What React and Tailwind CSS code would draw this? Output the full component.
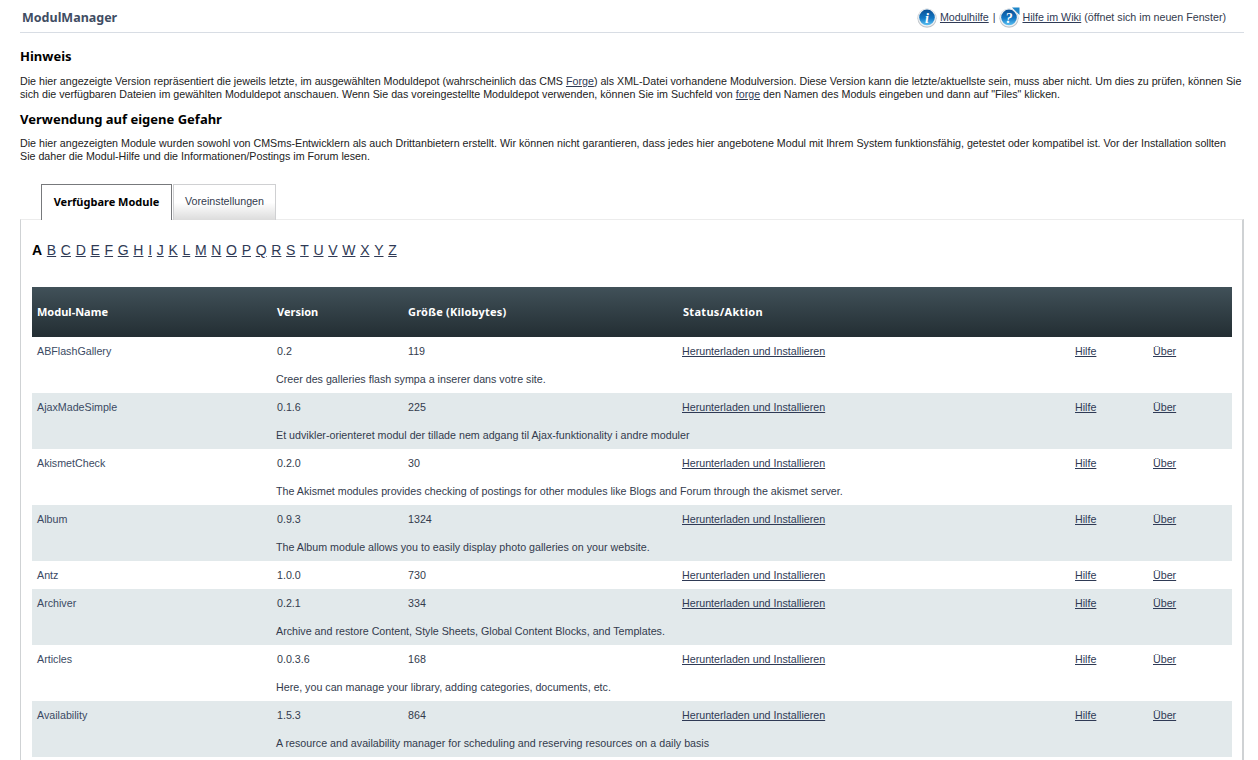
const letters = "BCDEFGHIJKLMNOPQRSTUVWXYZ".split("");
const mods = [
  ["ABFlashGallery", "0.2", "119", "Creer des galleries flash sympa a inserer dans votre site."],
  ["AjaxMadeSimple", "0.1.6", "225", "Et udvikler-orienteret modul der tillade nem adgang til Ajax-funktionality i andre moduler"],
  ["AkismetCheck", "0.2.0", "30", "The Akismet modules provides checking of postings for other modules like Blogs and Forum through the akismet server."],
  ["Album", "0.9.3", "1324", "The Album module allows you to easily display photo galleries on your website."],
  ["Antz", "1.0.0", "730", ""],
  ["Archiver", "0.2.1", "334", "Archive and restore Content, Style Sheets, Global Content Blocks, and Templates."],
  ["Articles", "0.0.3.6", "168", "Here, you can manage your library, adding categories, documents, etc."],
  ["Availability", "1.5.3", "864", "A resource and availability manager for scheduling and reserving resources on a daily basis"],
];
function Icon({ q }) {
  const id = q ? "gq" : "gi";
  return (
    <svg width="21" height="21" viewBox="0 0 21 21" className="shrink-0">
      <defs>
        <linearGradient id={id} x1="0" y1="0" x2="0" y2="1">
          <stop offset="0" stopColor="#0a4f94" />
          <stop offset="0.55" stopColor="#1277c4" />
          <stop offset="1" stopColor="#5cc0f2" />
        </linearGradient>
      </defs>
      <circle cx="10" cy="11.2" r="9.6" fill="#bfc5cb" />
      <circle cx="10" cy="10.6" r="9" fill="#eef1f3" />
      <circle cx="10" cy="10.4" r="7.8" fill={`url(#${id})`} />
      {q && <path d="M13 .5h7.5V8z" fill="#1f86c8" />}
      <text x="10" y="15.5" textAnchor="middle" fontSize="14" fontWeight="700" fontStyle="italic" fontFamily="Liberation Serif, serif" fill="#fff">{q ? "?" : "i"}</text>
    </svg>
  );
}
const Link = ({ children }) => <a className="underline text-[#2f3a55] cursor-pointer">{children}</a>;
function Row({ m, i }) {
  const bg = i % 2 ? "bg-[#e2e9eb]" : "bg-white";
  return (
    <>
      <tr className={`${bg} h-7`}>
        <td className="pl-[5px] text-[#3b4a63]">{m[0]}</td>
        <td className="pl-[5px]">{m[1]}</td>
        <td className="pl-[5px]">{m[2]}</td>
        <td className="pl-1"><Link>Herunterladen und Installieren</Link></td>
        <td className="pl-[5px]"><Link>Hilfe</Link></td>
        <td className="pl-[5px]"><Link>Über</Link></td>
      </tr>
      {m[3] && (
        <tr className={`${bg} h-7`}>
          <td></td>
          <td colSpan={5} className="pl-1">{m[3]}</td>
        </tr>
      )}
    </>
  );
}
const bold = "font-['Noto_Sans',sans-serif] font-bold";
export default function App() {
  return (
    <div className="h-[760px] w-[1258px] overflow-hidden bg-white text-[#333b4d] font-['Liberation_Sans',sans-serif] text-[10.7px] leading-[13px]">
      <div className="ml-5 w-[1224px]">
        <div className="flex h-[33px] items-center justify-between border-b border-[#d8dde4] pl-0.5 pr-[18px] pt-0.5">
          <div className={`${bold} text-[12.5px] text-[#3f4d63]`}>ModulManager</div>
          <div className="flex items-center">
            <Icon />
            <span className="ml-[2px]"><Link>Modulhilfe</Link></span>
            <span className="mx-[4px]">|</span>
            <Icon q />
            <span className="ml-[2px]"><Link>Hilfe im Wiki</Link> (öffnet sich im neuen Fenster)</span>
          </div>
        </div>
        <h3 className={`${bold} mt-[15px] text-[13px] leading-4 text-black`}>Hinweis</h3>
        <p className="mt-[11px] text-[#222]">
          Die hier angezeigte Version repräsentiert die jeweils letzte, im ausgewählten Moduldepot (wahrscheinlich das CMS <Link>Forge</Link>) als XML-Datei vorhandene Modulversion. Diese Version kann die letzte/aktuellste sein, muss aber nicht. Um dies zu prüfen, können Sie sich die verfügbaren Dateien im gewählten Moduldepot anschauen. Wenn Sie das voreingestellte Moduldepot verwenden, können Sie im Suchfeld von <Link>forge</Link> den Namen des Moduls eingeben und dann auf "Files" klicken.
        </p>
        <h3 className={`${bold} mt-[10px] text-[13px] leading-4 text-black`}>Verwendung auf eigene Gefahr</h3>
        <p className="mt-[10px] text-[#222]">
          Die hier angezeigten Module wurden sowohl von CMSms-Entwicklern als auch Drittanbietern erstellt. Wir können nicht garantieren, dass jedes hier angebotene Modul mit Ihrem System funktionsfähig, getestet oder kompatibel ist. Vor der Installation sollten Sie daher die Modul-Hilfe und die Informationen/Postings im Forum lesen.
        </p>
        <div className="mt-[21px] ml-[21px] flex h-[36px] gap-px">
          <div className={`${bold} flex w-[131px] items-center justify-center border border-b-0 border-[#77797c] bg-white pb-0.5 text-[11px] text-black`}>Verfügbare Module</div>
          <div className="flex w-[103px] items-center justify-center border border-b-0 border-[#cfd0d2] bg-gradient-to-b from-white from-50% to-[#dcdcdc] pb-0.5">Voreinstellungen</div>
        </div>
        <div className="-mt-px border-t border-l border-r-2 border-t-[#ececec] border-l-[#cfd2d4] border-r-[#cfd2d4] px-[11px] pb-8">
          <div className="mt-[22px] flex h-4 gap-[4.7px] text-[14px] leading-4">
            <b className="text-black">A</b>
            {letters.map((l) => <Link key={l}>{l}</Link>)}
          </div>
          <table className="mt-[29px] w-[1200px] table-fixed border-collapse">
            <colgroup>
              <col className="w-[240px]" />
              <col className="w-[131px]" />
              <col className="w-[275px]" />
              <col className="w-[392px]" />
              <col className="w-[78px]" />
              <col className="w-[84px]" />
            </colgroup>
            <thead>
              <tr className={`${bold} h-[50px] bg-gradient-to-b from-[#415159] to-[#232e33] text-left text-[11px] text-white`}>
                <th className="pl-[5px] pb-0.5">Modul-Name</th>
                <th className="pl-[5px] pb-0.5">Version</th>
                <th className="pl-[5px] pb-0.5 tracking-[0.22px]">Größe (Kilobytes)</th>
                <th className="pl-[5px] pb-0.5 tracking-[0.3px]">Status/Aktion</th>
                <th></th>
                <th></th>
              </tr>
            </thead>
            <tbody>
              {mods.map((m, i) => <Row key={m[0]} m={m} i={i} />)}
            </tbody>
          </table>
        </div>
      </div>
    </div>
  );
}
